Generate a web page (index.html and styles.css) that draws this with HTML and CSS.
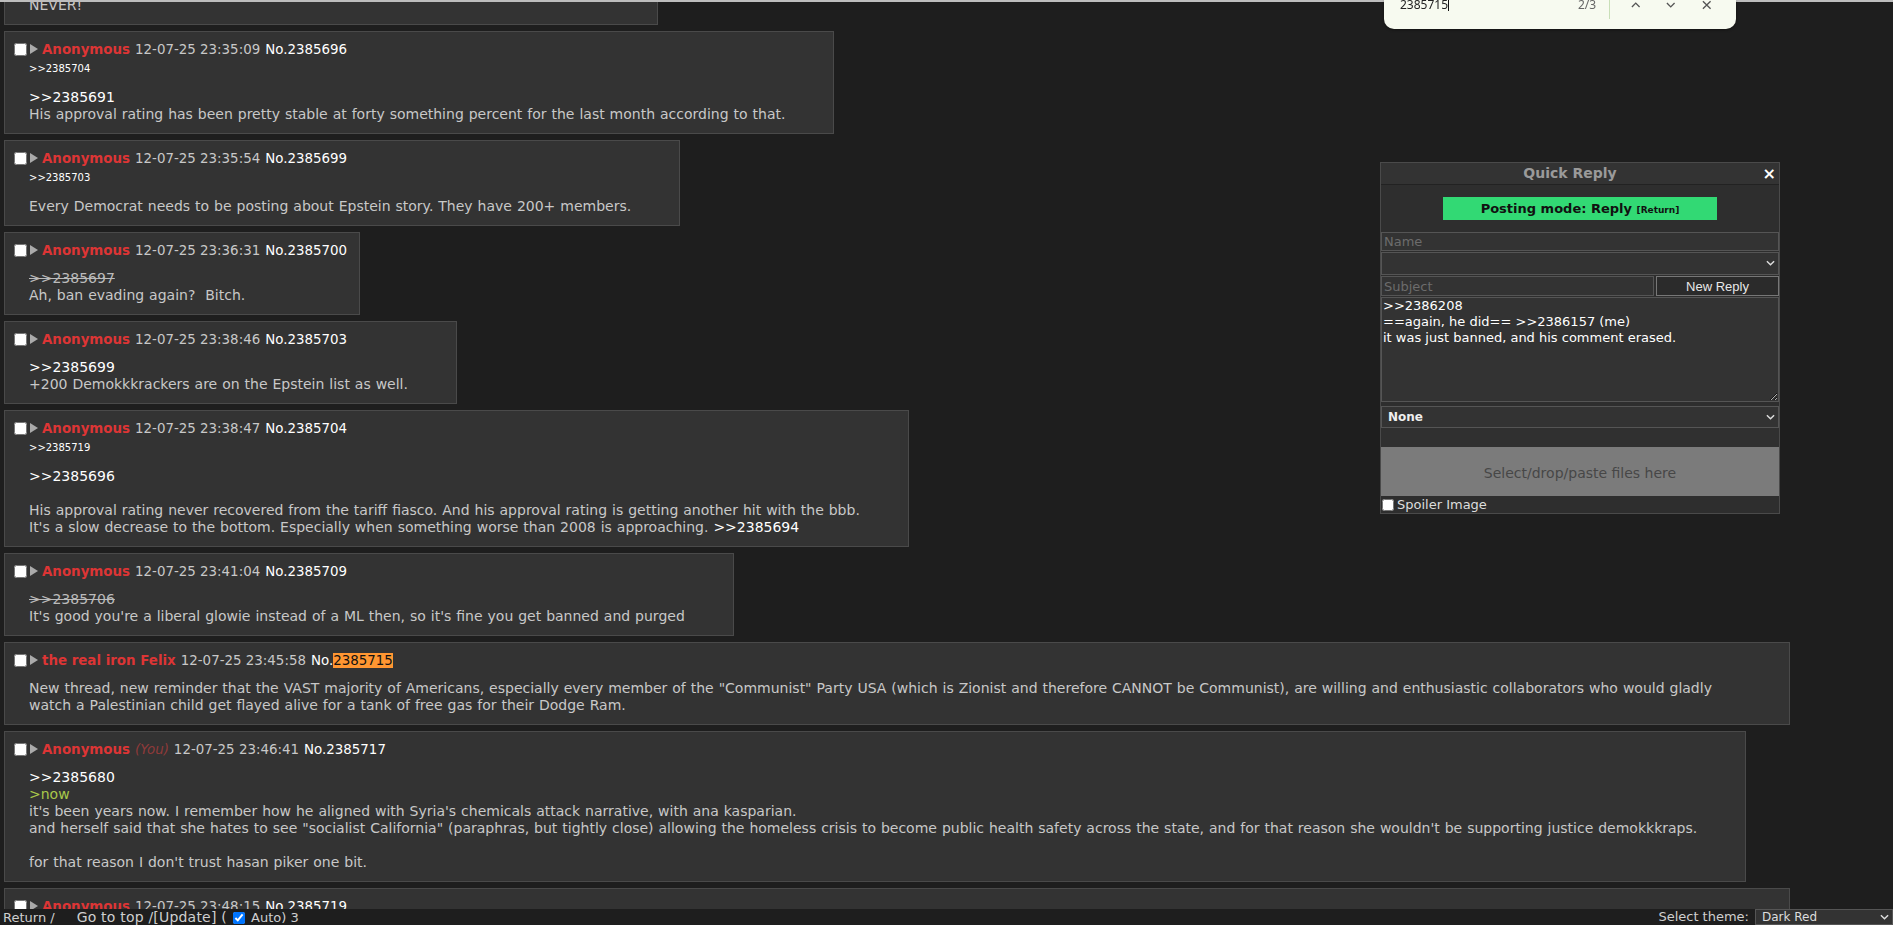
FILE: index.html
```html
<!DOCTYPE html>
<html lang="en">
<head>
  <meta charset="UTF-8">
  <title>Thread 2385680</title>
  <link rel="stylesheet" href="styles.css">
</head>
<body>
  <div class="topline"></div>

  <div class="thread">
    <div class="post post-cut">
      <div class="post-body">NEVER!</div>
    </div>

    <div class="post">
      <div class="post-head">
        <input type="checkbox" class="sel"><span class="tri"></span>
        <span class="name">Anonymous</span>
        <span class="date">12-07-25 23:35:09</span>
        <span class="no">No.2385696</span>
      </div>
      <div class="backlinks">&gt;&gt;2385704</div>
      <div class="post-body">
        <span class="quote">&gt;&gt;2385691</span><br>
        His approval rating has been pretty stable at forty something percent for the last month according to that.
      </div>
    </div>

    <div class="post">
      <div class="post-head">
        <input type="checkbox" class="sel"><span class="tri"></span>
        <span class="name">Anonymous</span>
        <span class="date">12-07-25 23:35:54</span>
        <span class="no">No.2385699</span>
      </div>
      <div class="backlinks">&gt;&gt;2385703</div>
      <div class="post-body">Every Democrat needs to be posting about Epstein story. They have 200+ members.</div>
    </div>

    <div class="post">
      <div class="post-head">
        <input type="checkbox" class="sel"><span class="tri"></span>
        <span class="name">Anonymous</span>
        <span class="date">12-07-25 23:36:31</span>
        <span class="no">No.2385700</span>
      </div>
      <div class="post-body">
        <span class="dead">&gt;&gt;2385697</span><br>
        Ah, ban evading again?&nbsp; Bitch.
      </div>
    </div>

    <div class="post">
      <div class="post-head">
        <input type="checkbox" class="sel"><span class="tri"></span>
        <span class="name">Anonymous</span>
        <span class="date">12-07-25 23:38:46</span>
        <span class="no">No.2385703</span>
      </div>
      <div class="post-body">
        <span class="quote">&gt;&gt;2385699</span><br>
        +200 Demokkkrackers are on the Epstein list as well.
      </div>
    </div>

    <div class="post">
      <div class="post-head">
        <input type="checkbox" class="sel"><span class="tri"></span>
        <span class="name">Anonymous</span>
        <span class="date">12-07-25 23:38:47</span>
        <span class="no">No.2385704</span>
      </div>
      <div class="backlinks">&gt;&gt;2385719</div>
      <div class="post-body">
        <span class="quote">&gt;&gt;2385696</span><br>
        <br>
        His approval rating never recovered from the tariff fiasco. And his approval rating is getting another hit with the bbb.<br>
        It's a slow decrease to the bottom. Especially when something worse than 2008 is approaching. <span class="quote">&gt;&gt;2385694</span>
      </div>
    </div>

    <div class="post">
      <div class="post-head">
        <input type="checkbox" class="sel"><span class="tri"></span>
        <span class="name">Anonymous</span>
        <span class="date">12-07-25 23:41:04</span>
        <span class="no">No.2385709</span>
      </div>
      <div class="post-body">
        <span class="dead">&gt;&gt;2385706</span><br>
        It's good you're a liberal glowie instead of a ML then, so it's fine you get banned and purged
      </div>
    </div>

    <div class="post post-wide">
      <div class="post-head">
        <input type="checkbox" class="sel"><span class="tri"></span>
        <span class="name">the real iron Felix</span>
        <span class="date">12-07-25 23:45:58</span>
        <span class="no">No.<span class="hl">2385715</span></span>
      </div>
      <div class="post-body">New thread, new reminder that the VAST majority of Americans, especially every member of the "Communist" Party USA (which is Zionist and therefore CANNOT be Communist), are willing and enthusiastic collaborators who would gladly<br>
        watch a Palestinian child get flayed alive for a tank of free gas for their Dodge Ram.</div>
    </div>

    <div class="post">
      <div class="post-head">
        <input type="checkbox" class="sel"><span class="tri"></span>
        <span class="name">Anonymous</span>
        <span class="you">(You)</span>
        <span class="date">12-07-25 23:46:41</span>
        <span class="no">No.2385717</span>
      </div>
      <div class="post-body">
        <span class="quote">&gt;&gt;2385680</span><br>
        <span class="green">&gt;now</span><br>
        it's been years now. I remember how he aligned with Syria's chemicals attack narrative, with ana kasparian.<br>
        and herself said that she hates to see "socialist California" (paraphras, but tightly close) allowing the homeless crisis to become public health safety across the state, and for that reason she wouldn't be supporting justice demokkkraps.<br>
        <br>
        for that reason I don't trust hasan piker one bit.
      </div>
    </div>

    <div class="post post-wide">
      <div class="post-head">
        <input type="checkbox" class="sel"><span class="tri"></span>
        <span class="name">Anonymous</span>
        <span class="date">12-07-25 23:48:15</span>
        <span class="no">No.2385719</span>
      </div>
      <div class="post-body">&nbsp;</div>
    </div>
  </div>

  <!-- browser find bar -->
  <div class="findbar">
    <div class="find-row">
      <span class="find-text">2385715<span class="caret"></span></span>
      <span class="find-count">2/3</span>
      <span class="find-sep"></span>
      <svg class="find-icon" viewBox="0 0 12 12"><path d="M2 8 L6 4 L10 8"/></svg>
      <svg class="find-icon" viewBox="0 0 12 12"><path d="M2 4 L6 8 L10 4"/></svg>
      <svg class="find-icon" viewBox="0 0 12 12"><path d="M2 2 L10 10 M10 2 L2 10"/></svg>
    </div>
  </div>

  <div class="qr">
    <div class="qr-title">Quick Reply<span class="qr-close">&times;</span></div>
    <div class="qr-mode">Posting mode: Reply <span class="qr-return">[Return]</span></div>
    <input class="qr-field" type="text" placeholder="Name">
    <div class="qr-select-wrap">
      <select class="qr-select"><option></option></select>
      <svg class="chev" viewBox="0 0 10 6"><path d="M1 1 L5 5 L9 1"/></svg>
    </div>
    <div class="qr-row">
      <input class="qr-field qr-subject" type="text" placeholder="Subject">
      <button class="qr-btn">New Reply</button>
    </div>
    <textarea class="qr-text">&gt;&gt;2386208
==again, he did== &gt;&gt;2386157 (me)
it was just banned, and his comment erased.</textarea>
    <div class="qr-select-wrap qr-flag">
      <select class="qr-select"><option>None</option></select>
      <svg class="chev" viewBox="0 0 10 6"><path d="M1 1 L5 5 L9 1"/></svg>
    </div>
    <div class="qr-gap"></div>
    <div class="qr-drop">Select/drop/paste files here</div>
    <label class="qr-spoiler"><input type="checkbox"> Spoiler Image</label>
  </div>

  <div class="footer">
    <div class="footer-left">Return /<span class="top-link">Go to top /[Update] (</span><input type="checkbox" class="auto" checked> Auto) 3</div>
    <div class="footer-right">
      <span>Select theme:</span>
      <div class="theme-wrap">
        <select class="theme"><option>Dark Red</option></select>
        <svg class="chev" viewBox="0 0 10 6"><path d="M1 1 L5 5 L9 1"/></svg>
      </div>
    </div>
  </div>
</body>
</html>
```

FILE: styles.css
```css
body {
  margin: 0;
  height: 925px;
  overflow: hidden;
  background: #1e1e1e;
  color: #c8c8c8;
  font: 14px/17px "DejaVu Sans", Verdana, sans-serif;
  word-spacing: 0.5px;
}
.topline {
  position: fixed;
  top: 0;
  left: 0;
  right: 0;
  height: 2px;
  background: #bdbdbd;
  z-index: 5;
}
.thread {
  padding: 2px 103px 0 4px;
}
/* posts */
.post {
  box-sizing: border-box;
  width: fit-content;
  max-width: 100%;
  background: #333;
  border: 1px solid #4a4a4a;
  padding: 8px 8px 8px 10px;
  margin-bottom: 6px;
}
.post-cut {
  width: 654px;
  margin-top: -25px;
}
.post-wide {
  width: 100%;
}
.post-head {
  display: flex;
  align-items: center;
  gap: 5px;
  height: 18px;
  white-space: nowrap;
  padding-right: 4px;
  font-size: 13.4px;
  word-spacing: 0;
}
.sel {
  width: 13px;
  height: 13px;
  margin: 0 -2px 0 -1px;
}
.tri {
  width: 0;
  height: 0;
  margin-right: -1px;
  border-left: 8px solid #aaa;
  border-top: 5px solid transparent;
  border-bottom: 5px solid transparent;
}
.name {
  color: #dd3535;
  font-weight: bold;
}
.you {
  color: #8f3a3a;
  font-style: italic;
}
.date {
  color: #c8c8c8;
}
.no {
  color: #fff;
}
.hl {
  background: #ff9632;
  color: #111;
}
.backlinks {
  font-size: 10px;
  line-height: 18px;
  color: #fff;
  margin: 2px 0 0 14px;
}
.post-body {
  margin: 11px 40px 2px 14px;
}
.quote {
  color: #fff;
}
.dead {
  color: #bbb;
  text-decoration: line-through;
}
.green {
  color: #a9c94a;
}
/* find bar */
.findbar {
  position: fixed;
  top: 0;
  left: 1384px;
  width: 352px;
  height: 29px;
  background: #f7faf0;
  border-radius: 0 0 10px 10px;
  box-shadow: 0 1px 3px rgba(0, 0, 0, 0.4);
  z-index: 6;
}
.find-row {
  display: flex;
  align-items: center;
  height: 16px;
  margin-top: -3px;
  padding-left: 16px;
  font: 12px/16px "Noto Sans", sans-serif;
  color: #222;
}
.find-text {
  width: 186px;
}
.caret {
  display: inline-block;
  width: 1px;
  height: 13px;
  background: #111;
  vertical-align: -2px;
}
.find-count {
  color: #666;
  width: 32px;
}
.find-sep {
  width: 1px;
  height: 22px;
  margin-top: 6px;
  background: #c9dfb8;
  margin-right: 20px;
}
.find-icon {
  width: 12px;
  height: 12px;
  margin-right: 24px;
  fill: none;
  stroke: #555;
  stroke-width: 1.4;
}
/* quick reply */
.qr {
  position: fixed;
  left: 1380px;
  top: 162px;
  width: 400px;
  box-sizing: border-box;
  background: #2e2e2e;
  border: 1px solid #4a4a4a;
  word-spacing: 0;
  z-index: 4;
}
.qr-title {
  position: relative;
  height: 21px;
  padding-right: 20px;
  line-height: 21px;
  text-align: center;
  background: #333;
  border-bottom: 1px solid #222;
  color: #9a9a9a;
  font-weight: bold;
  font-size: 14px;
}
.qr-close {
  position: absolute;
  right: 3px;
  top: 0;
  color: #fff;
  font-size: 16px;
}
.qr-mode {
  width: 274px;
  height: 23px;
  margin: 12px auto;
  background: #32d974;
  color: #111;
  font-weight: bold;
  font-size: 13px;
  line-height: 23px;
  text-align: center;
}
.qr-return {
  font-size: 9px;
}
.qr-field {
  display: block;
  box-sizing: border-box;
  width: 100%;
  height: 19px;
  margin: 0;
  padding: 0 2px;
  background: #333;
  border: 1px solid #555;
  color: #ddd;
  font: 13px "DejaVu Sans", Verdana, sans-serif;
}
.qr-field::placeholder {
  color: #6c6c6c;
}
.qr-select-wrap {
  position: relative;
  margin-top: 1px;
}
.qr-select {
  display: block;
  box-sizing: border-box;
  width: 100%;
  height: 23px;
  margin: 0;
  padding: 0 6px;
  appearance: none;
  background: #333;
  border: 1px solid #555;
  color: #eee;
  font: bold 12px "DejaVu Sans", Verdana, sans-serif;
}
.chev {
  position: absolute;
  right: 4px;
  top: 8px;
  width: 9px;
  height: 6px;
  fill: none;
  stroke: #ddd;
  stroke-width: 1.6;
}
.qr-row {
  display: flex;
  gap: 2px;
  margin-top: 1px;
}
.qr-subject {
  width: 273px;
  height: 20px;
}
.qr-btn {
  flex: 1;
  height: 20px;
  margin: 0;
  padding: 0;
  background: #2b2b2b;
  border: 1px solid #777;
  color: #e8e8e8;
  font: 13px "Liberation Sans", Arial, sans-serif;
}
.qr-text {
  display: block;
  box-sizing: border-box;
  width: 100%;
  height: 105px;
  margin: 1px 0 0;
  padding: 0 1px;
  background: #333;
  border: 1px solid #555;
  color: #fff;
  font: 13px/16px "DejaVu Sans", Verdana, sans-serif;
  resize: both;
}
.qr-flag {
  margin-top: 4px;
}
.qr-flag .qr-select {
  height: 22px;
}
.qr-gap {
  height: 19px;
  background: #303030;
}
.qr-drop {
  height: 49px;
  line-height: 52px;
  text-align: center;
  background: #7b7b7b;
  color: #474747;
  font-size: 14px;
}
.qr-spoiler {
  display: flex;
  align-items: center;
  gap: 3px;
  height: 17px;
  color: #ddd;
  font-size: 13px;
}
.qr-spoiler input {
  width: 12px;
  height: 12px;
  margin: 0 0 0 1px;
}
/* bottom bar */
.footer {
  position: fixed;
  left: 0;
  right: 0;
  bottom: 0;
  height: 16px;
  display: flex;
  justify-content: space-between;
  align-items: center;
  background: #1e1e1e;
  font-size: 13px;
  line-height: 16px;
  word-spacing: 0;
  color: #cfcfcf;
  z-index: 3;
}
.footer-left {
  padding-left: 3px;
  white-space: nowrap;
}
.top-link {
  margin: 0 4px 0 22px;
  font-size: 14px;
  letter-spacing: 0.2px;
}
.auto {
  width: 12px;
  height: 12px;
  margin: 0 2px;
  vertical-align: -2px;
}
.footer-right {
  display: flex;
  align-items: center;
  gap: 6px;
}
.theme-wrap {
  position: relative;
}
.theme {
  display: block;
  width: 138px;
  height: 16px;
  margin: 0;
  padding: 0 6px;
  appearance: none;
  background: #333;
  border: 1px solid #555;
  color: #ddd;
  font: 12px "DejaVu Sans", Verdana, sans-serif;
}
.theme-wrap .chev {
  top: 5px;
  right: 4px;
}
```
